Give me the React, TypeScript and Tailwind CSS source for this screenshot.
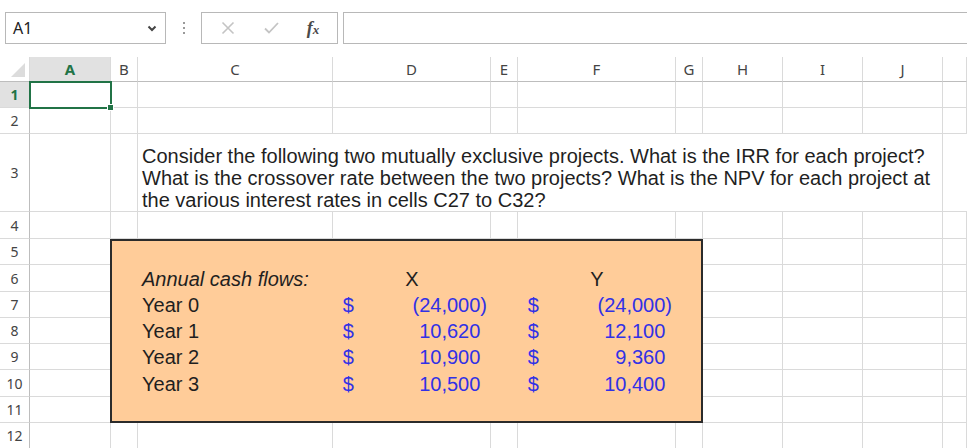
import React from 'react';

type Col = { k: string; w: string };

const COLS: Col[] = [
  { k: 'A', w: 'w-[81px]' },
  { k: 'B', w: 'w-[27px]' },
  { k: 'C', w: 'w-[195px]' },
  { k: 'D', w: 'w-[158px]' },
  { k: 'E', w: 'w-[27px]' },
  { k: 'F', w: 'w-[158px]' },
  { k: 'G', w: 'w-[27px]' },
  { k: 'H', w: 'w-[80px]' },
  { k: 'I', w: 'w-[80px]' },
  { k: 'J', w: 'w-[80px]' },
  { k: '', w: 'flex-1' },
];

const RIGHT_COLS: Col[] = COLS.slice(7);

const BOX_ROWS = [
  { n: 5, h: 'h-[26px]' },
  { n: 6, h: 'h-[27px]' },
  { n: 7, h: 'h-[26px]' },
  { n: 8, h: 'h-[26px]' },
  { n: 9, h: 'h-[26px]' },
  { n: 10, h: 'h-[27px]' },
  { n: 11, h: 'h-[26px]' },
];

const CASH = [
  { label: 'Year 0', x: '(24,000)', y: '(24,000)' },
  { label: 'Year 1', x: '10,620', y: '12,100' },
  { label: 'Year 2', x: '10,900', y: '9,360' },
  { label: 'Year 3', x: '10,500', y: '10,400' },
];

function RowHdr({ n, h, selected }: { n: number; h: string; selected?: boolean }) {
  return (
    <div
      className={`${h} w-[30px] shrink-0 flex items-center justify-center border-r border-b border-r-[#bdbdbd] border-b-[#dadada] text-[14px] font-['Noto_Sans',sans-serif] ${
        selected ? 'bg-[#e1e1e1] text-[#217346] font-bold' : 'text-[#444]'
      }`}
    >
      {n}
    </div>
  );
}

function Selection() {
  return (
    <div className="absolute left-[-1px] top-[-1px] w-[83px] h-[28px] border-2 border-[#217346] z-10">
      <div className="absolute right-[-4px] bottom-[-4px] w-[7px] h-[7px] bg-[#217346] border border-white" />
    </div>
  );
}

function PlainRow({ n, h, selected }: { n: number; h: string; selected?: boolean }) {
  return (
    <div className={`flex ${h}`}>
      <RowHdr n={n} h={h} selected={selected} />
      {COLS.map((c, i) => (
        <div key={i} className={`${c.w} shrink-0 relative border-r border-b border-[#dadada]`}>
          {selected && i === 0 ? <Selection /> : null}
        </div>
      ))}
    </div>
  );
}

function Money({ v }: { v: string }) {
  const neg = v.startsWith('(');
  return (
    <div className="w-[158px] shrink-0 flex items-end justify-between pl-[3px] pr-[4px] text-[#3131e6]">
      <span>
        <span className="invisible">(</span>$
      </span>
      <span>
        {v}
        {neg ? null : <span className="invisible">)</span>}
      </span>
    </div>
  );
}

export default function App() {
  return (
    <div className="w-[967px] h-[448px] overflow-hidden bg-white">
      {/* Toolbar */}
      <div className="h-[57px] flex items-start pt-[12px] pl-[5px]">
        <div className="w-[161px] h-[32px] shrink-0 border border-[#b8b8b8] flex items-center justify-between pl-[7px] pr-[8px]">
          <span className="text-[16px] text-[#222] font-['Noto_Sans',sans-serif]">A1</span>
          <svg width="10" height="7" viewBox="0 0 10 7">
            <polyline points="1.5,1.5 5,5 8.5,1.5" fill="none" stroke="#444" strokeWidth="2" />
          </svg>
        </div>
        <div className="w-[35px] h-[32px] shrink-0 flex flex-col items-center justify-center gap-[3px] pl-[1px]">
          <div className="w-[2px] h-[2px] bg-[#9a9a9a]" />
          <div className="w-[2px] h-[2px] bg-[#9a9a9a]" />
          <div className="w-[2px] h-[2px] bg-[#9a9a9a]" />
        </div>
        <div className="w-[137px] h-[32px] shrink-0 border border-[#b8b8b8] flex items-center">
          <div className="w-[50px] flex justify-center pl-[2px]">
            <svg width="14" height="14" viewBox="0 0 14 14">
              <path d="M1.5 1.5 L12.5 12.5 M12.5 1.5 L1.5 12.5" stroke="#c4c4c4" strokeWidth="1.6" fill="none" />
            </svg>
          </div>
          <div className="w-[38px] flex justify-center">
            <svg width="15" height="12" viewBox="0 0 15 12">
              <path d="M1 6.5 L5 10.5 L14 1" stroke="#c4c4c4" strokeWidth="1.8" fill="none" />
            </svg>
          </div>
          <div className="w-[46px] flex justify-center">
            <span className="italic font-bold font-['Liberation_Serif',serif] text-[18px] text-[#4a4a4a] leading-none">
              f<span className="text-[13px]">x</span>
            </span>
          </div>
        </div>
        <div className="w-[640px] h-[32px] shrink-0 ml-[5px] border border-[#b8b8b8]" />
      </div>

      {/* Column headers */}
      <div className="flex h-[25px]">
        <div className="w-[30px] shrink-0 border-r border-b border-r-[#dadada] border-b-[#bdbdbd] flex items-end justify-end pr-[4px] pb-[4px]">
          <svg width="14" height="14" viewBox="0 0 14 14">
            <polygon points="14,0 14,14 0,14" fill="#dcdcdc" />
          </svg>
        </div>
        {COLS.map((c, i) => (
          <div
            key={i}
            className={`${c.w} shrink-0 border-r border-b border-r-[#dadada] border-b-[#bdbdbd] flex items-center justify-center text-[15px] font-['Noto_Sans',sans-serif] ${
              i === 0 ? 'bg-[#e1e1e1] text-[#217346] font-bold' : 'text-[#444]'
            }`}
          >
            {c.k}
          </div>
        ))}
      </div>

      <PlainRow n={1} h="h-[26px]" selected />
      <PlainRow n={2} h="h-[26px]" />

      {/* Row 3 */}
      <div className="flex h-[78px]">
        <RowHdr n={3} h="h-[78px]" />
        <div className="w-[81px] shrink-0 border-r border-b border-[#dadada]" />
        <div className="w-[27px] shrink-0 border-r border-b border-[#dadada]" />
        <div className="w-[805px] shrink-0 border-r border-b border-[#dadada] flex items-end pl-[4px] font-['Liberation_Sans',Arial,sans-serif] text-[20px] leading-[22px] text-[#1f1f1f]">
          <p>
            Consider the following two mutually exclusive projects. What is the IRR for each project? What is the crossover rate between the two projects? What is the NPV for each project at the various interest rates in cells C27 to C32?
          </p>
        </div>
        <div className="flex-1 border-b border-[#dadada]" />
      </div>

      <PlainRow n={4} h="h-[27px]" />

      {/* Rows 5-11 with boxed table */}
      <div className="flex">
        <div className="flex flex-col shrink-0">
          {BOX_ROWS.map((r) => (
            <RowHdr key={r.n} n={r.n} h={r.h} />
          ))}
        </div>
        <div className="flex flex-col shrink-0">
          {BOX_ROWS.map((r) => (
            <div key={r.n} className={`${r.h} w-[80px] border-b border-[#dadada]`} />
          ))}
        </div>
        <div className="w-[593px] shrink-0 bg-[#ffcc99] shadow-[inset_0_0_0_2px_#2b2b2b] flex flex-col font-['Liberation_Sans',Arial,sans-serif] text-[20px] leading-[26px] text-[#1f1f1f]">
          {BOX_ROWS.map((r, idx) => {
            const cash = idx >= 2 && idx <= 5 ? CASH[idx - 2] : null;
            return (
              <div key={r.n} className={`${r.h} flex`}>
                <div className="w-[28px] shrink-0" />
                <div className="w-[195px] shrink-0 flex items-end pl-[4px]">
                  {idx === 1 ? <span className="italic">Annual cash flows:</span> : cash ? cash.label : null}
                </div>
                {idx === 1 ? (
                  <div className="w-[158px] shrink-0 flex items-end justify-center">X</div>
                ) : cash ? (
                  <Money v={cash.x} />
                ) : (
                  <div className="w-[158px] shrink-0" />
                )}
                <div className="w-[27px] shrink-0" />
                {idx === 1 ? (
                  <div className="w-[158px] shrink-0 flex items-end justify-center">Y</div>
                ) : cash ? (
                  <Money v={cash.y} />
                ) : (
                  <div className="w-[158px] shrink-0" />
                )}
                <div className="w-[27px] shrink-0" />
              </div>
            );
          })}
        </div>
        <div className="flex-1 flex flex-col">
          {BOX_ROWS.map((r) => (
            <div key={r.n} className={`${r.h} flex`}>
              {RIGHT_COLS.map((c, i) => (
                <div key={i} className={`${c.w} shrink-0 border-r border-b border-[#dadada]`} />
              ))}
            </div>
          ))}
        </div>
      </div>

      <PlainRow n={12} h="h-[26px]" />
    </div>
  );
}
